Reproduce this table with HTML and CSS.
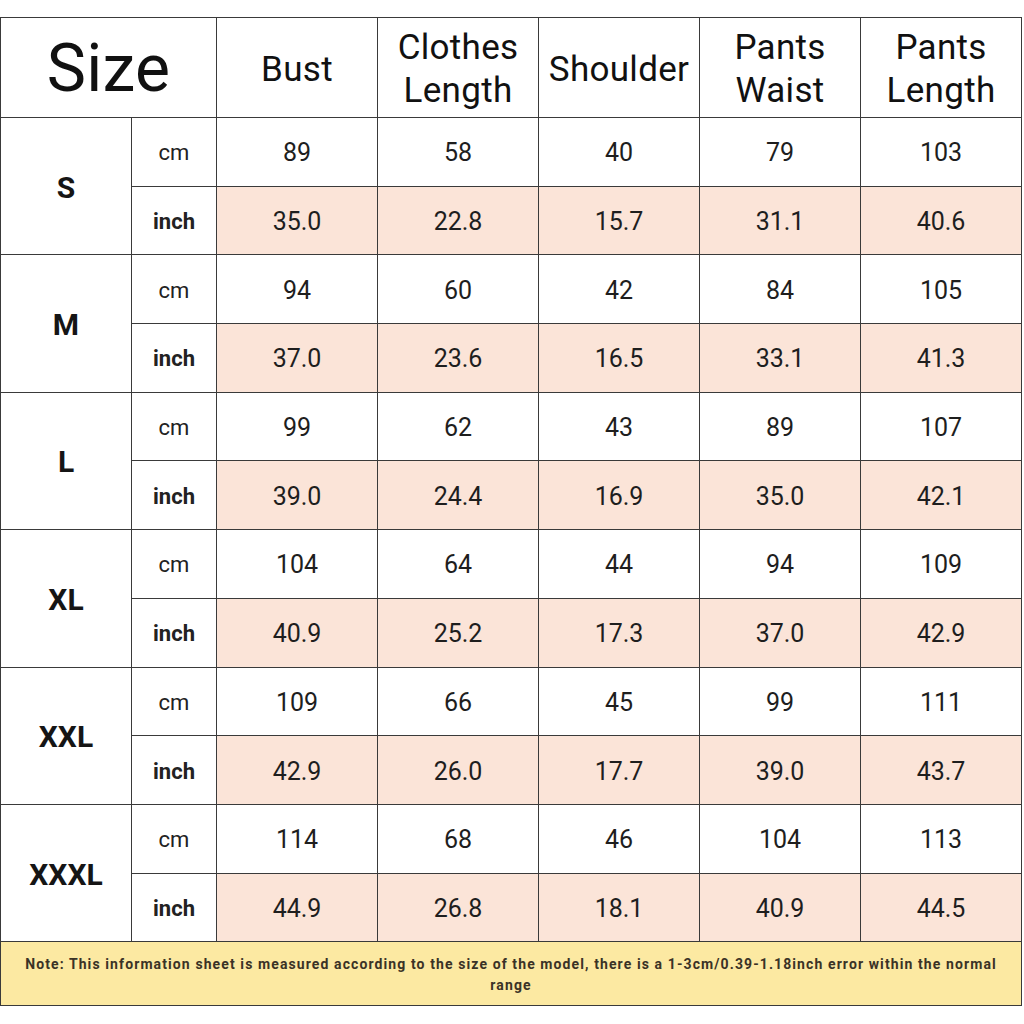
FILE: index.html
```html
<!DOCTYPE html>
<html>
<head>
<meta charset="utf-8">
<link rel="stylesheet" href="styles.css">
</head>
<body>
<div class="sheet">
<table class="chart">
  <colgroup>
    <col class="c-size"><col class="c-unit"><col class="c-val"><col class="c-val"><col class="c-val"><col class="c-val"><col class="c-val">
  </colgroup>
  <thead>
    <tr class="head">
      <th colspan="2" class="title">Size</th>
      <th>Bust</th>
      <th>Clothes<br>Length</th>
      <th>Shoulder</th>
      <th>Pants<br>Waist</th>
      <th>Pants<br>Length</th>
    </tr>
  </thead>
  <tbody>
    <tr><td rowspan="2" class="size">S</td><td class="unit">cm</td><td>89</td><td>58</td><td>40</td><td>79</td><td>103</td></tr>
    <tr class="in"><td class="unit b">inch</td><td>35.0</td><td>22.8</td><td>15.7</td><td>31.1</td><td>40.6</td></tr>
    <tr><td rowspan="2" class="size">M</td><td class="unit">cm</td><td>94</td><td>60</td><td>42</td><td>84</td><td>105</td></tr>
    <tr class="in"><td class="unit b">inch</td><td>37.0</td><td>23.6</td><td>16.5</td><td>33.1</td><td>41.3</td></tr>
    <tr><td rowspan="2" class="size">L</td><td class="unit">cm</td><td>99</td><td>62</td><td>43</td><td>89</td><td>107</td></tr>
    <tr class="in"><td class="unit b">inch</td><td>39.0</td><td>24.4</td><td>16.9</td><td>35.0</td><td>42.1</td></tr>
    <tr><td rowspan="2" class="size">XL</td><td class="unit">cm</td><td>104</td><td>64</td><td>44</td><td>94</td><td>109</td></tr>
    <tr class="in"><td class="unit b">inch</td><td>40.9</td><td>25.2</td><td>17.3</td><td>37.0</td><td>42.9</td></tr>
    <tr><td rowspan="2" class="size">XXL</td><td class="unit">cm</td><td>109</td><td>66</td><td>45</td><td>99</td><td>111</td></tr>
    <tr class="in"><td class="unit b">inch</td><td>42.9</td><td>26.0</td><td>17.7</td><td>39.0</td><td>43.7</td></tr>
    <tr><td rowspan="2" class="size">XXXL</td><td class="unit">cm</td><td>114</td><td>68</td><td>46</td><td>104</td><td>113</td></tr>
    <tr class="in"><td class="unit b">inch</td><td>44.9</td><td>26.8</td><td>18.1</td><td>40.9</td><td>44.5</td></tr>
  </tbody>
  <tfoot>
    <tr><td colspan="7" class="note">Note: This information sheet is measured according to the size of the model, there is a 1-3cm/0.39-1.18inch error within the normal range</td></tr>
  </tfoot>
</table>
</div>
</body>
</html>
```
FILE: styles.css
```css
html, body {
  margin: 0;
  padding: 0;
  background: #ffffff;
}
.sheet {
  padding-top: 17px;
  width: 1022px;
}
.chart {
  width: 1022px;
  border-collapse: collapse;
  table-layout: fixed;
  font-family: Roboto, "Liberation Sans", sans-serif;
  color: #1e1e1e;
}
.c-size { width: 131px; }
.c-unit { width: 85px; }
.c-val { width: 161px; }
.chart th, .chart td {
  border: 1px solid #3a3a3a;
  padding: 0;
  text-align: center;
  vertical-align: middle;
}
.head th {
  height: 96px;
  padding-top: 3px;
  font-weight: 400;
  font-size: 35px;
  line-height: 43px;
  color: #111;
  letter-spacing: 0.3px;
}
.head th.title {
  font-size: 66px;
  line-height: 66px;
}
.chart tbody td {
  height: 65.7px;
  padding-top: 2px;
  font-size: 25px;
}
.chart tbody tr.in td {
  background: #fbe4d8;
}
.chart tbody tr.in td.unit {
  background: #ffffff;
}
.chart td.size {
  background: #ffffff;
  font-weight: 700;
  font-size: 30px;
  color: #151515;
}
.chart td.unit {
  font-size: 22px;
  color: #222;
}
.chart td.unit.b {
  font-weight: 700;
}
.chart td.note {
  height: 61px;
  background: #fce9a2;
  font-size: 14px;
  font-weight: 700;
  letter-spacing: 1.1px;
  line-height: 21px;
  color: #3a3226;
  padding: 2px 22px 0;
}
```
